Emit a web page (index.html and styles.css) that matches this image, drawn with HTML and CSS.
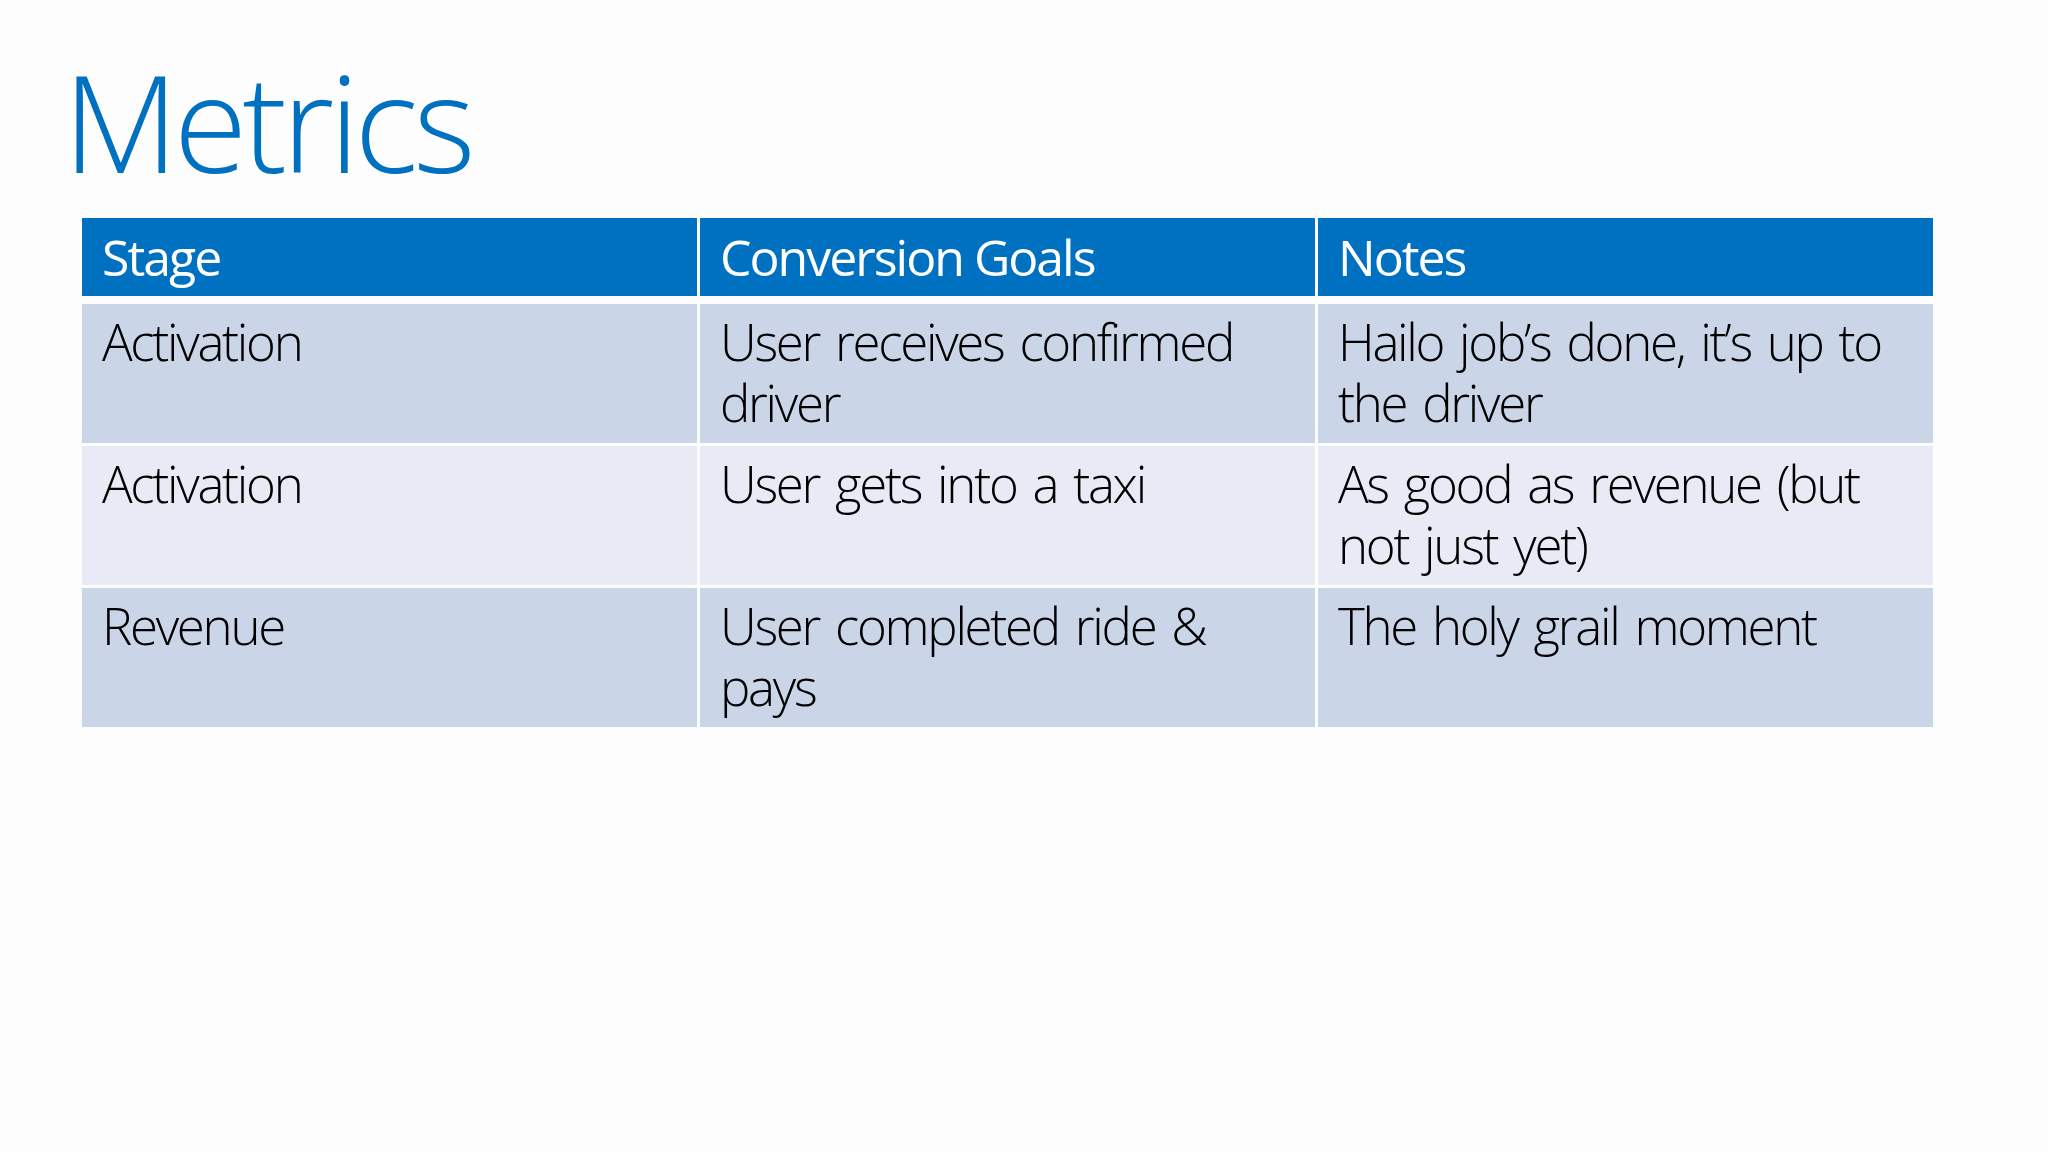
FILE: index.html
```html
<!DOCTYPE html>
<html lang="en">
<head>
<meta charset="utf-8">
<title>Metrics</title>
<link rel="stylesheet" href="styles.css">
</head>
<body>
<main class="slide">
  <h1 class="title">Metrics</h1>
  <div class="table">
    <div class="row head">
      <div class="cell">Stage</div>
      <div class="cell">Conversion Goals</div>
      <div class="cell">Notes</div>
    </div>
    <div class="row band">
      <div class="cell">Activation</div>
      <div class="cell">User receives confirmed<br>driver</div>
      <div class="cell">Hailo job’s done, it’s up to<br>the driver</div>
    </div>
    <div class="row light">
      <div class="cell">Activation</div>
      <div class="cell">User gets into a taxi</div>
      <div class="cell">As good as revenue (but<br>not just yet)</div>
    </div>
    <div class="row band">
      <div class="cell">Revenue</div>
      <div class="cell">User completed ride &amp;<br>pays</div>
      <div class="cell">The holy grail moment</div>
    </div>
  </div>
</main>
</body>
</html>
```

FILE: styles.css
```css
html, body {
  margin: 0;
  padding: 0;
  background: #fdfdfd;
}

.slide {
  width: 2048px;
  height: 1152px;
  box-sizing: border-box;
  padding: 54px 0 0 82px;
  font-family: "Open Sans", "Liberation Sans", sans-serif;
}

.title {
  margin: 0 0 30px -19px;
  font-weight: 300;
  font-size: 134px;
  line-height: 134px;
  color: #0070c0;
  letter-spacing: -5px;
}

.table {
  width: 1851px;
  display: flex;
  flex-direction: column;
  gap: 3px;
}

.row {
  display: grid;
  grid-template-columns: 615px 615px 615px;
  column-gap: 3px;
}

.cell {
  box-sizing: border-box;
  padding: 7px 6px 10px 20px;
  font-size: 51px;
  line-height: 61px;
  font-weight: 300;
  color: #000;
  white-space: nowrap;
  letter-spacing: -2.3px;
  word-spacing: 5px;
  height: 139px;
}

.row.head {
  margin-bottom: 5px;
}

.row.head .cell {
  height: 78px;
  padding-top: 9px;
  padding-bottom: 8px;
  background: #0070c0;
  color: #fff;
  font-weight: 400;
  font-size: 50px;
  letter-spacing: -2px;
  word-spacing: 0;
}

.row.band .cell {
  background: #cbd5e8;
}

.row.light .cell {
  background: #e8ebf5;
}
```
